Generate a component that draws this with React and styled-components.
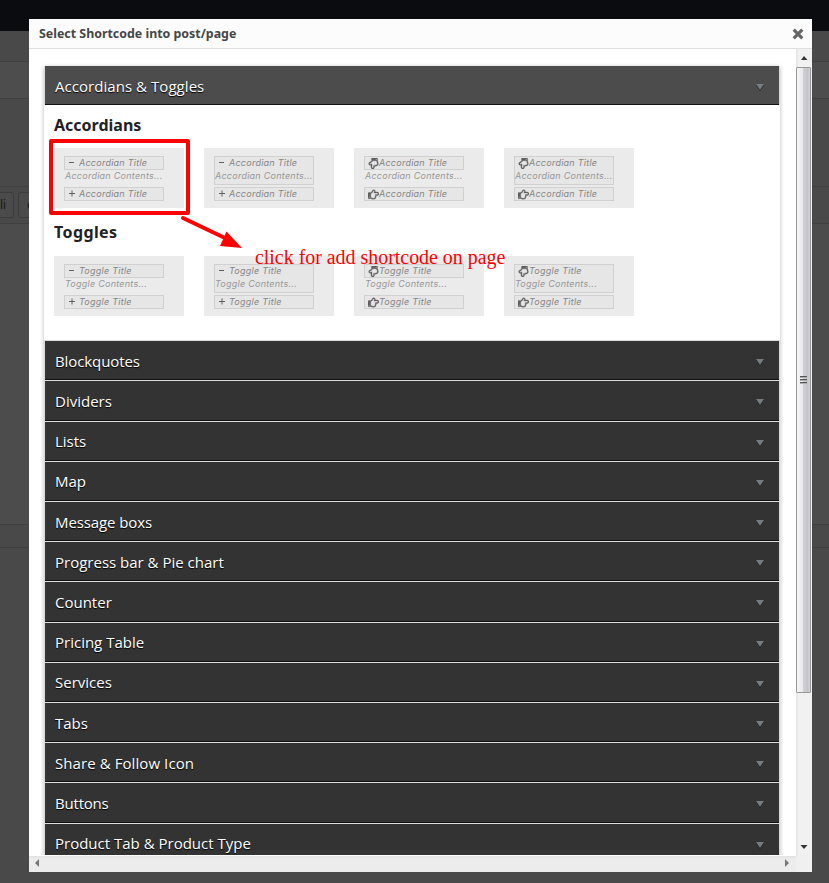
import React from "react";
import styled, { createGlobalStyle, css } from "styled-components";
import { FaRegHandPointDown, FaRegHandPointRight } from "react-icons/fa";

const GlobalStyle = createGlobalStyle`
  * { box-sizing: border-box; }
  body { margin: 0; overflow: hidden; background: #494949; }
`;

const ui = css`font-family: "Noto Sans", "Open Sans", sans-serif;`;

const Page = styled.div`
  position: relative;
  width: 829px;
  height: 883px;
  overflow: hidden;
  background: #494949;
  ${ui}
`;
const AdminBar = styled.div`height: 31px; background: #0a0c0f;`;
const Band = styled.div`
  height: ${(p) => p.$h}px;
  background: ${(p) => p.$bg || "#494949"};
  border-bottom: 1px solid #404040;
`;
const ToolBand = styled(Band)`
  display: flex;
  gap: 4px;
  padding-top: 5px;
  color: #151515;
  font-size: 12px;
`;
const QuickTag = styled.span`
  width: ${(p) => p.$w}px;
  height: 26px;
  padding-left: ${(p) => p.$pad || 0}px;
  border: 1px solid #3c3c3c;
  border-left-width: ${(p) => (p.$cut ? 0 : 1)}px;
  border-radius: ${(p) => (p.$cut ? "0 3px 3px 0" : "3px")};
  line-height: 24px;
  background: #4b4b4b;
`;

const Modal = styled.section`
  position: absolute;
  left: 29px;
  top: 19px;
  width: 783px;
  height: 853px;
  display: grid;
  grid-template: 30px 806px 17px / 767px 16px;
  background: #fff;
`;
const TitleBar = styled.header`
  grid-column: 1 / 3;
  display: flex;
  justify-content: space-between;
  align-items: center;
  padding: 0 8px 0 10px;
  background: #fcfcfc;
  border-bottom: 1px solid #dfdfdf;
`;
const Title = styled.h1`
  margin: 0;
  color: #464646;
  font: 700 12.4px/29px "Noto Sans", "Open Sans", sans-serif;
  white-space: nowrap;
`;
const Viewport = styled.main`
  overflow: hidden;
  padding: 17px 16px 0 15px;
`;
const Accordion = styled.div`box-shadow: 0 1px 4px rgba(0, 0, 0, 0.3);`;
const Row = styled.div`
  display: flex;
  align-items: center;
  justify-content: space-between;
  height: ${(p) => p.$h}px;
  padding: 1px 15px 0 10px;
  color: #fff;
  background: ${(p) => (p.$open ? "#4c4c4c" : "#333")};
  border: solid #ddd;
  border-width: ${(p) => (p.$open ? "0 1px" : "1px 1px 0")};
  box-shadow: inset 0 -1px #111;
  text-shadow: 0 1px 1px #000;
`;
const Label = styled.span`
  margin-bottom: ${(p) => (p.$raised ? 2 : 0)}px;
  font: 400 15px/20px "Open Sans", "Noto Sans", sans-serif;
  letter-spacing: ${(p) => p.$track}px;
  white-space: nowrap;
`;
const Panel = styled.div`
  height: 235px;
  padding: 8px 10px 0;
  background: #fff;
`;
const Heading = styled.h2`
  margin: 0;
  color: #222;
  font: 700 16px/24px "Noto Sans", "Open Sans", sans-serif;
  letter-spacing: ${(p) => p.$track}px;
`;
const Cards = styled.div`
  display: flex;
  gap: 20px;
  margin: ${(p) => p.$before}px 0 ${(p) => p.$after || 0}px;
`;
const Card = styled.div`
  width: 130px;
  height: 60px;
  padding: 8px 20px 0 10px;
  background: #ebebeb;
`;
const Item = styled.div`
  height: ${(p) => (p.$boxed ? 29 : 26)}px;
  margin-bottom: ${(p) => (p.$boxed ? 2 : 5)}px;
  border: 1px solid ${(p) => (p.$boxed ? "#d0d0d0" : "transparent")};
  background: ${(p) => (p.$boxed ? "#e6e6e6" : "transparent")};
`;
const Bar = styled.div`
  display: flex;
  align-items: center;
  height: 14px;
  margin: ${(p) => (p.$inner ? "-1px" : "0")};
  padding-left: 3px;
  border: 1px solid ${(p) => (p.$plain ? "transparent" : "#d0d0d0")};
  background: ${(p) => (p.$plain ? "transparent" : "#e6e6e6")};
`;
const Small = styled.span`
  font: italic 400 9px/12px Inter, sans-serif;
  letter-spacing: 0.25px;
  color: #858585;
  white-space: nowrap;
`;
const Content = styled(Small)`
  display: block;
  margin-top: 1px;
  color: #979797;
`;
const Mark = styled.svg`
  flex: none;
  width: 11px;
  height: 12px;
`;
const Hand = styled.span`
  flex: none;
  display: flex;
  width: 11px;
  height: 11px;
  color: #606060;
  svg {
    width: 11px;
    height: 11px;
    stroke: #606060;
    stroke-width: 14px;
  }
`;
const VBar = styled.div`
  display: flex;
  flex-direction: column;
  align-items: center;
  background: linear-gradient(90deg, #e5e5e5, #f1f1f1 3px);
`;
const HBar = styled.div`
  display: flex;
  justify-content: space-between;
  align-items: center;
  padding: 0 6px 2px 5px;
  background: linear-gradient(#fff, #fff 1px, #e2e2e2 1px, #ececec 4px);
`;
const Corner = styled.div`background: #f0f0f0;`;
const Thumb = styled.div`
  display: flex;
  flex-direction: column;
  align-items: center;
  justify-content: center;
  gap: 1px;
  width: 15px;
  height: 626px;
  margin-right: 1px;
  border: 1px solid #979797;
  border-radius: 1px;
  background: linear-gradient(90deg, #f5f5f5, #e9e9eb 45%, #d0d0d4 50%, #c2c2c8 85%, #dcdcde);
`;
const Grip = styled.i`
  width: 7px;
  height: 2px;
  background: linear-gradient(#555 50%, #aaa 50%);
`;
const Arrow = styled.svg`
  flex: none;
  display: block;
  width: ${(p) => p.$w}px;
  height: ${(p) => p.$h}px;
  margin-top: ${(p) => p.$drop || 0}px;
`;
const Frame = styled.div`
  position: absolute;
  left: 49px;
  top: 139px;
  width: 141px;
  height: 76px;
  border: 4px solid #f00;
  border-radius: 2px;
`;
const Pointer = styled.svg`
  position: absolute;
  left: 177px;
  top: 210px;
  width: 70px;
  height: 42px;
`;
const Note = styled.div`
  position: absolute;
  left: 255px;
  top: 246px;
  color: #f00;
  font: 20px/22px "Liberation Serif", serif;
  letter-spacing: -0.04px;
  white-space: nowrap;
`;

const rows = [
  { label: "Blockquotes", h: 40, track: -0.1 },
  { label: "Dividers", h: 41, raised: true },
  { label: "Lists", h: 40, raised: true },
  { label: "Map", h: 40, raised: true },
  { label: "Message boxs", h: 40, track: -0.1 },
  { label: "Progress bar & Pie chart", h: 40 },
  { label: "Counter", h: 41, raised: true },
  { label: "Pricing Table", h: 40, raised: true },
  { label: "Services", h: 40, raised: true },
  { label: "Tabs", h: 40 },
  { label: "Share & Follow Icon", h: 40, track: 0.08 },
  { label: "Buttons", h: 41, track: -0.2, raised: true },
  { label: "Product Tab & Product Type", h: 40, raised: true },
];

const Caret = () => (
  <Arrow $w={8} $h={7} $drop={2} viewBox="0 0 8 7">
    <path d="M0 1H8L4 7Z" fill="#1c1c1c" />
    <path d="M0 0H8L4 6Z" fill="#777c80" />
  </Arrow>
);

function Glyph({ kind }) {
  if (kind === "down") return <Hand><FaRegHandPointDown /></Hand>;
  if (kind === "right") return <Hand><FaRegHandPointRight /></Hand>;
  return (
    <Mark viewBox="0 0 11 12">
      <path
        d={kind === "minus" ? "M1 5.5H6" : "M1 5.5H7M4 2.5V8.5"}
        stroke="#606060"
        fill="none"
      />
    </Mark>
  );
}

function Preview({ name, boxed, hand }) {
  return (
    <Card>
      <Item $boxed={boxed}>
        <Bar $inner $plain={boxed}>
          <Glyph kind={hand ? "down" : "minus"} />
          <Small>{name} Title</Small>
        </Bar>
        <Content>{name} Contents...</Content>
      </Item>
      <Bar>
        <Glyph kind={hand ? "right" : "plus"} />
        <Small>{name} Title</Small>
      </Bar>
    </Card>
  );
}

const Previews = ({ name, before, after }) => (
  <Cards $before={before} $after={after}>
    <Preview name={name} />
    <Preview name={name} boxed />
    <Preview name={name} hand />
    <Preview name={name} boxed hand />
  </Cards>
);

export default function App() {
  return (
    <Page>
      <GlobalStyle />
      <AdminBar />
      <Band $h={31} />
      <Band $h={37} $bg="#4d4d4d" />
      <Band $h={88} />
      <ToolBand $h={37}>
        <QuickTag $w={14} $cut>li</QuickTag>
        <QuickTag $w={40} $pad={8}>code</QuickTag>
      </ToolBand>
      <Band $h={301} $bg="#4c4c4c" />
      <Band $h={23} />

      <Modal>
        <TitleBar>
          <Title>Select Shortcode into post/page</Title>
          <Arrow $w={12} $h={12} viewBox="0 0 12 12">
            <path d="M1.7 1.7L10.3 10.3M10.3 1.7L1.7 10.3" stroke="#666" strokeWidth="3.2" />
          </Arrow>
        </TitleBar>
        <Viewport>
          <Accordion>
            <Row $open $h={39}>
              <Label $track={0.05}>Accordians &amp; Toggles</Label>
              <Caret />
            </Row>
            <Panel>
              <Heading $track={0}>Accordians</Heading>
              <Previews name="Accordian" before={11} after={12} />
              <Heading $track={0.4}>Toggles</Heading>
              <Previews name="Toggle" before={12} />
            </Panel>
            {rows.map(({ label, h, track = 0, raised }) => (
              <Row key={label} $h={h}>
                <Label $track={track} $raised={raised}>{label}</Label>
                <Caret />
              </Row>
            ))}
          </Accordion>
        </Viewport>
        <VBar>
          <Arrow $w={8} $h={18} viewBox="0 0 8 18"><path d="M1 11L4 7L7.5 11Z" fill="#333" /></Arrow>
          <Thumb><Grip /><Grip /><Grip /></Thumb>
          <Arrow $w={8} $h={162} viewBox="0 0 8 162"><path d="M.5 152H7.5L4 156Z" fill="#333" /></Arrow>
        </VBar>
        <HBar>
          <Arrow $w={6} $h={8} viewBox="0 0 6 8"><path d="M5 0V8L1 4Z" fill="#777" /></Arrow>
          <Arrow $w={6} $h={8} viewBox="0 0 6 8"><path d="M1 0V8L5 4Z" fill="#777" /></Arrow>
        </HBar>
        <Corner />
      </Modal>

      <Frame />
      <Pointer viewBox="0 0 70 42">
        <path d="M6 8L48 28" stroke="#f00" strokeWidth="4" strokeLinecap="round" />
        <path d="M49.5 21.5L65 38L43 36Z" fill="#f00" />
      </Pointer>
      <Note>click for add shortcode on page</Note>
    </Page>
  );
}
